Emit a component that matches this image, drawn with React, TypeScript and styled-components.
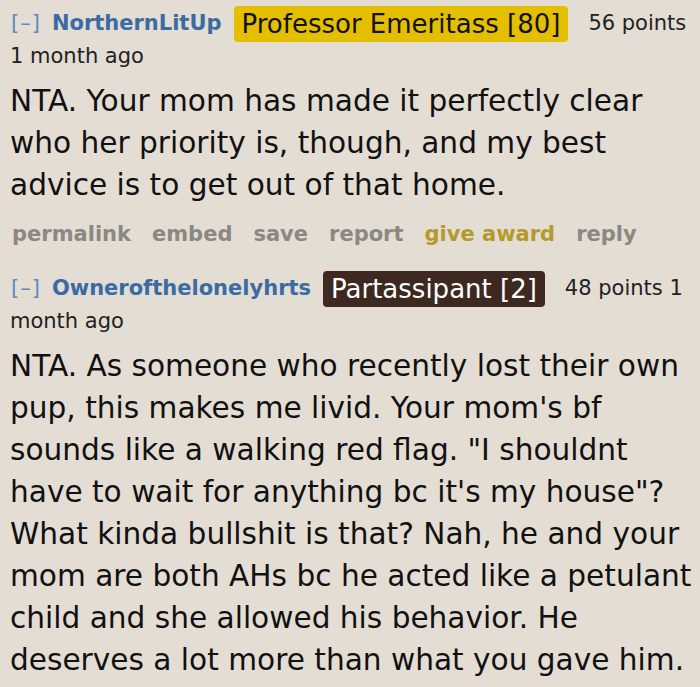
import React from "react";
import styled, { createGlobalStyle } from "styled-components";

const Global = createGlobalStyle`
  html, body { margin: 0; padding: 0; background: #e3ddd4; }
  body { font-family: "DejaVu Sans", Verdana, sans-serif; color: #111; }
`;

const Page = styled.div`
  width: 700px;
  height: 687px;
  overflow: hidden;
  background: #e3ddd4;
  padding: 6px 10px 0 10px;
  box-sizing: border-box;
`;

const Comment = styled.div`
  display: flex;
  flex-direction: column;
`;

const Header = styled.div`
  font-family: "DejaVu Sans", sans-serif;
  font-size: 21px;
  line-height: 28px;
  white-space: nowrap;
`;

const Toggle = styled.span`
  color: #5f8bc0;
  margin: 0 11px 0 1px;
  letter-spacing: 1px;
`;

const User = styled.span`
  color: #3a6ba3;
  font-weight: bold;
  margin-right: 12px;
`;

const Flair = styled.span<{ $bg: string; $fg: string }>`
  display: inline-block;
  background: ${(p) => p.$bg};
  color: ${(p) => p.$fg};
  font-size: 26px;
  line-height: 36px;
  height: 36px;
  padding: 0 8px;
  border-radius: 4px;
  margin-right: 20px;
  vertical-align: middle;
`;

const Meta = styled.span`
  color: #222;
`;

const Body = styled.div`
  font-size: 29.6px;
  line-height: 42px;
  color: #111;
  margin-top: 10px;
  white-space: nowrap;
  margin-right: -10px;
`;

const Actions = styled.div`
  display: flex;
  gap: 21px;
  font-size: 21px;
  font-weight: bold;
  line-height: 30px;
  margin: 13px 0 22px 2px;
`;

const Action = styled.span<{ $gold?: boolean }>`
  color: ${(p) => (p.$gold ? "#b39a2c" : "#8b8883")};
`;

export default function App() {
  return (
    <Page>
      <Global />
      <Comment>
        <Header>
          <Toggle>[–]</Toggle>
          <User>NorthernLitUp</User>
          <Flair $bg="#e4bf00" $fg="#111">Professor Emeritass [80]</Flair>
          <Meta>56 points</Meta>
          <br />
          <Meta>1 month ago</Meta>
        </Header>
        <Body>
          NTA. Your mom has made it perfectly clear
          <br />
          who her priority is, though, and my best
          <br />
          advice is to get out of that home.
        </Body>
        <Actions>
          <Action>permalink</Action>
          <Action>embed</Action>
          <Action>save</Action>
          <Action>report</Action>
          <Action $gold>give award</Action>
          <Action>reply</Action>
        </Actions>
      </Comment>
      <Comment>
        <Header>
          <Toggle>[–]</Toggle>
          <User>Ownerofthelonelyhrts</User>
          <Flair $bg="#3d2920" $fg="#fff">Partassipant [2]</Flair>
          <Meta>48 points 1</Meta>
          <br />
          <Meta>month ago</Meta>
        </Header>
        <Body>
          NTA. As someone who recently lost their own
          <br />
          pup, this makes me livid. Your mom's bf
          <br />
          sounds like a walking red flag. "I shouldnt
          <br />
          have to wait for anything bc it's my house"?
          <br />
          What kinda bullshit is that? Nah, he and your
          <br />
          mom are both AHs bc he acted like a petulant
          <br />
          child and she allowed his behavior. He
          <br />
          deserves a lot more than what you gave him.
        </Body>
      </Comment>
    </Page>
  );
}
